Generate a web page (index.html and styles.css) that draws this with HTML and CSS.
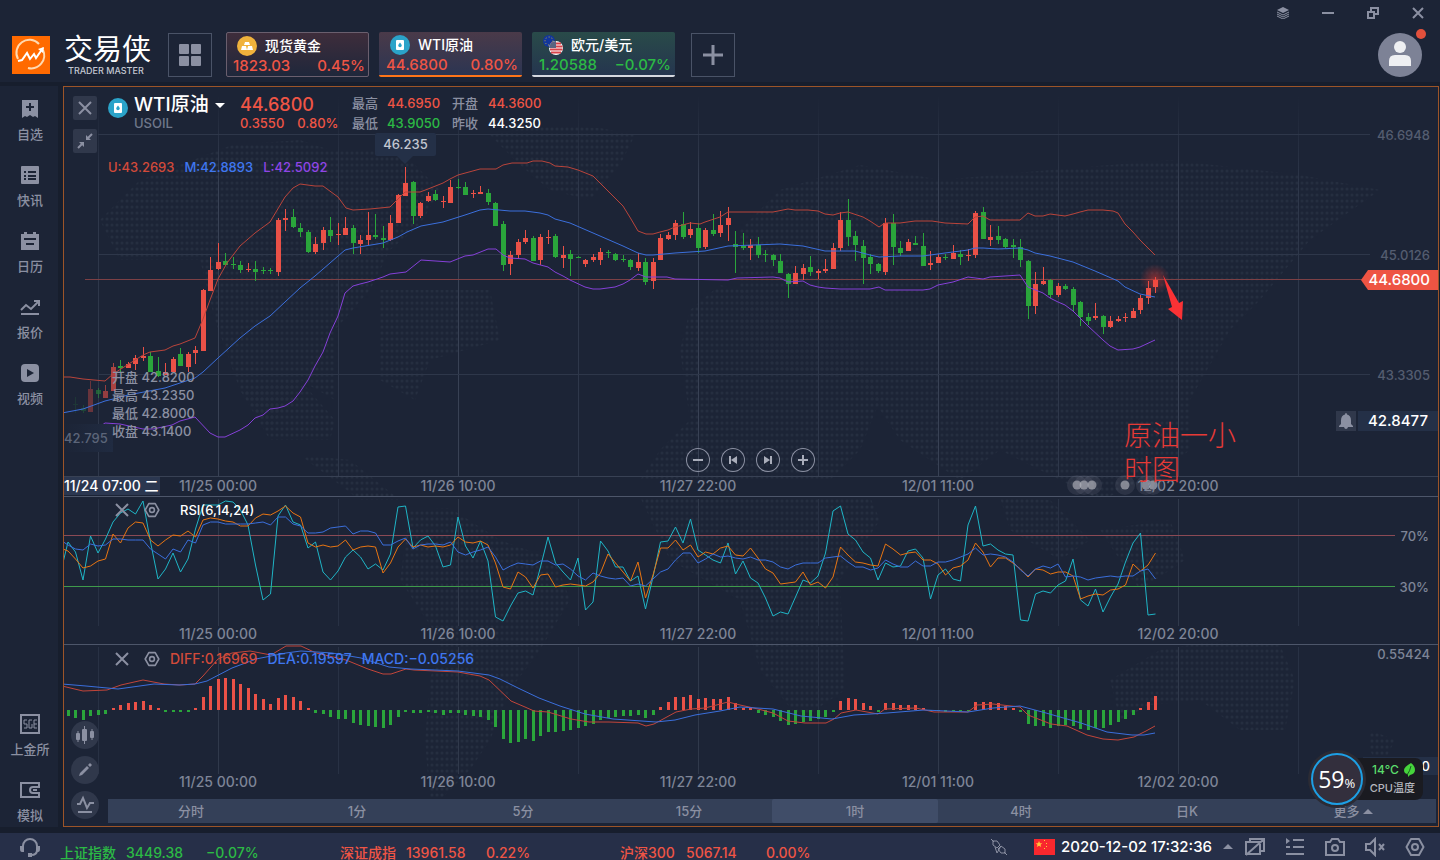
FILE: index.html
```html
<!DOCTYPE html>
<html lang="zh-CN">
<head>
    <meta charset="UTF-8">
    <meta name="viewport" content="width=device-width, initial-scale=1.0">
    <title>交易侠</title>
    <link rel="stylesheet" href="styles.css">
</head>
<body>

<!-- shared icons -->
<svg class="sprite" width="0" height="0" aria-hidden="true">
    <symbol id="i-close" viewBox="0 0 16 16"><path d="M2 2l12 12M14 2L2 14" fill="none" stroke="currentColor" stroke-width="2"/></symbol>
    <symbol id="i-hex" viewBox="0 0 20 20"><path d="M6 2h8l4.500 8-4.500 8H6L1.500 10z" fill="none" stroke="currentColor" stroke-width="2" stroke-linejoin="round"/><circle cx="10" cy="10" r="3" fill="none" stroke="currentColor" stroke-width="2"/></symbol>
    <symbol id="i-oil" viewBox="0 0 20 20"><circle cx="10" cy="10" r="10" fill="#2ba3c9"/><rect x="6" y="5" width="8" height="10" rx="1" fill="#fff"/><path d="M10 7.500c1.200 1.500 1.700 2.200 1.700 3a1.700 1.700 0 0 1-3.400 0c0-.8.500-1.500 1.700-3z" fill="#2ba3c9"/></symbol>
</svg>

<header class="header">
    <div class="window-controls">
        <button type="button" aria-label="图层">
            <svg width="12" height="12" viewBox="0 0 12 12"><path d="M6 0l6 3-6 3-6-3z" fill="currentColor"/><path d="M0 5l6 3 6-3M0 7l6 3 6-3M0 9l6 3 6-3" fill="none" stroke="currentColor"/></svg>
        </button>
        <button type="button" aria-label="最小化">
            <svg width="12" height="12" viewBox="0 0 12 12"><path d="M0 6h12" stroke="currentColor" stroke-width="2"/></svg>
        </button>
        <button type="button" aria-label="还原">
            <svg width="12" height="12" viewBox="0 0 12 12"><path d="M1 5h6v6H1zM4 5V1h7v6H7" fill="none" stroke="currentColor" stroke-width="2"/></svg>
        </button>
        <button type="button" aria-label="关闭">
            <svg width="12" height="12" viewBox="0 0 12 12"><path d="M1 1l10 10M11 1L1 11" stroke="currentColor" stroke-width="2"/></svg>
        </button>
    </div>
    <div class="toolbar">
        <a class="brand" href="#">
            <svg width="38" height="38" viewBox="0 0 38 38">
                <rect width="38" height="38" fill="#ff6a00"/>
                <path d="M31 14a13 13 0 0 1-15 18M6 23A13 13 0 0 1 27 8" fill="none" stroke="#ffd9b0" stroke-width="2"/>
                <path d="M6 25l4-1 5-7 3 6 4-5 2 4 7-10" fill="none" stroke="#fff" stroke-width="2"/>
                <path d="M26 13l6-2-1 6z" fill="#fff"/>
            </svg>
            <span class="brand-text">
                <span class="brand-name">交易侠</span>
                <span class="brand-sub">TRADER MASTER</span>
            </span>
        </a>
        <button class="square-btn" type="button" aria-label="布局">
            <svg width="24" height="24" viewBox="0 0 24 24" fill="currentColor"><rect x="1" y="1" width="10" height="10" rx="1"/><rect x="13" y="1" width="10" height="10" rx="1"/><rect x="1" y="13" width="10" height="10" rx="1"/><rect x="13" y="13" width="10" height="10" rx="1"/></svg>
        </button>
        <div class="cards">
            <button class="card card-gold up" type="button">
                <span class="card-name">
                    <svg width="20" height="20" viewBox="0 0 20 20"><circle cx="10" cy="10" r="10" fill="#f0b23c"/><path d="M8 6h4l1 3H7zM5 10h4l1 4H4zM11 10h4l1 4h-6z" fill="#fff"/></svg>
                    现货黄金
                </span>
                <span class="card-values"><span>1823.03</span><span>0.45%</span></span>
            </button>
            <button class="card card-oil up" type="button">
                <span class="card-name"><svg width="20" height="20"><use href="#i-oil"/></svg>WTI原油</span>
                <span class="card-values"><span>44.6800</span><span>0.80%</span></span>
            </button>
            <button class="card card-eur down" type="button">
                <span class="card-name">
                    <svg width="20" height="20" viewBox="0 0 20 20">
                        <circle cx="6" cy="6" r="6" fill="#12369c"/>
                        <circle cx="6" cy="6" r="4" fill="none" stroke="#c9b53c" stroke-dasharray="1 2"/>
                        <circle cx="13" cy="13" r="7" fill="#fff"/>
                        <path d="M8 8.500h10M7 11.500h12.500M7 14.500h12.500M8 17.500h10" stroke="#d8434a" stroke-width="2"/>
                        <path d="M6 13a7 7 0 0 1 7-7v7z" fill="#5a6480"/>
                    </svg>
                    欧元/美元
                </span>
                <span class="card-values"><span>1.20588</span><span>−0.07%</span></span>
            </button>
        </div>
        <button class="square-btn" type="button" aria-label="添加">
            <svg width="20" height="20" viewBox="0 0 20 20"><path d="M10 0v20M0 10h20" stroke="currentColor" stroke-width="3"/></svg>
        </button>
        <button class="avatar" type="button" aria-label="账户">
            <svg width="44" height="44" viewBox="0 0 44 44"><circle cx="22" cy="22" r="22" fill="#7d8296"/><circle cx="22" cy="14" r="6" fill="#eeeff2"/><path d="M11 33v-5q0-6 6-6h10q6 0 6 6v5z" fill="#eeeff2"/></svg>
            <span class="avatar-dot"></span>
        </button>
    </div>
</header>

<main class="workspace">
    <nav class="sidebar">
        <div class="side-group">
            <a class="side-item" href="#">
                <svg width="20" height="20" viewBox="0 0 20 20"><path d="M2 1h16v18l-3-2-2 1-3-2-3 2-2-1-3 2z" fill="currentColor"/><path d="M10 4v8M6 8h8" stroke="#1c2436" stroke-width="2"/></svg>
                <span>自选</span>
            </a>
            <a class="side-item" href="#">
                <svg width="20" height="20" viewBox="0 0 20 20"><rect x="1" y="1" width="18" height="18" rx="1" fill="currentColor"/><path d="M4 7h2M8 7h8M4 11h2M8 11h8M4 14h2M8 14h8" stroke="#1c2436" stroke-width="2"/></svg>
                <span>快讯</span>
            </a>
            <a class="side-item" href="#">
                <svg width="20" height="20" viewBox="0 0 20 20"><path d="M1 3h3V1h3v2h6V1h3v2h3v16H1z" fill="currentColor"/><path d="M4 8h12M6 13h8" stroke="#1c2436" stroke-width="2"/></svg>
                <span>日历</span>
            </a>
            <a class="side-item" href="#">
                <svg width="20" height="20" viewBox="0 0 20 20"><path d="M1 13l5-5 5 4 8-8M14 4h5v5M1 17h18" fill="none" stroke="currentColor" stroke-width="2"/></svg>
                <span>报价</span>
            </a>
            <a class="side-item" href="#">
                <svg width="20" height="20" viewBox="0 0 20 20"><rect x="1" y="1" width="18" height="18" rx="4" fill="currentColor"/><path d="M7 6l7 4-7 4z" fill="#1c2436"/></svg>
                <span>视频</span>
            </a>
        </div>
        <div class="side-group">
            <a class="side-item" href="#">
                <svg width="20" height="20" viewBox="0 0 20 20"><rect x="1" y="1" width="18" height="18" fill="none" stroke="currentColor" stroke-width="2"/><path d="M7 6H4v4h3v4H4M12 6H9v8h3v-4M17 6h-3v8h3M14 10h3" fill="none" stroke="currentColor"/></svg>
                <span>上金所</span>
            </a>
            <a class="side-item" href="#">
                <svg width="20" height="20" viewBox="0 0 20 20"><path d="M19 6V3H1v14h18v-3M20 7h-7q-3 0-3 3t3 3h7" fill="none" stroke="currentColor" stroke-width="2"/><path d="M13 10h4" stroke="currentColor" stroke-width="2"/></svg>
                <span>模拟</span>
            </a>
        </div>
    </nav>

    <section class="chart-panel">
        <svg class="world-map" viewBox="64 87 1374 739" aria-hidden="true">
            <defs>
                <pattern id="dots" width="5" height="6" patternUnits="userSpaceOnUse"><circle cx="2" cy="3" r="1.500" fill="#252e40"/></pattern>
            </defs>
            <g fill="url(#dots)" id="continents"></g>
        </svg>

        <div class="pane">
            <svg class="plot" id="pricePlot" viewBox="64 87 1374 409"></svg>
            <div class="pane-tools">
                <button type="button" aria-label="关闭"><svg width="16" height="16"><use href="#i-close"/></svg></button>
                <button type="button" aria-label="缩小">
                    <svg width="16" height="16" viewBox="0 0 16 16"><path d="M15 1l-5 5M1 15l5-5" stroke="currentColor" stroke-width="2"/><path d="M9 2v5h5zM2 9h5v5z" fill="currentColor"/></svg>
                </button>
            </div>
            <div class="quote">
                <div class="quote-title">
                    <svg width="20" height="20"><use href="#i-oil"/></svg>
                    <div>
                        <h1>WTI原油<i class="caret-down"></i></h1>
                        <p>USOIL</p>
                    </div>
                </div>
                <div class="quote-last up">
                    <strong>44.6800</strong>
                    <p><span>0.3550</span><span>0.80%</span></p>
                </div>
                <dl class="quote-stats">
                    <dt>最高</dt><dd class="up">44.6950</dd>
                    <dt>开盘</dt><dd class="up">44.3600</dd>
                    <dt>最低</dt><dd class="down">43.9050</dd>
                    <dt>昨收</dt><dd>44.3250</dd>
                </dl>
            </div>
            <div class="legend legend-boll">
                <span class="c-red">U:43.2693</span>
                <span class="c-blue">M:42.8893</span>
                <span class="c-purple">L:42.5092</span>
            </div>
            <div class="peak">46.235</div>
            <div class="trough">42.795</div>
            <ul class="ohlc">
                <li>开盘 42.8200</li>
                <li>最高 43.2350</li>
                <li>最低 42.8000</li>
                <li>收盘 43.1400</li>
            </ul>
            <div class="chart-nav">
                <button type="button" aria-label="缩小"><svg width="24" height="24" viewBox="0 0 24 24"><path d="M7 12h10" stroke="currentColor" stroke-width="2"/></svg></button>
                <button type="button" aria-label="后退"><svg width="24" height="24" viewBox="0 0 24 24" fill="currentColor"><path d="M8 8h2v8H8zM16 8v8l-6-4z"/></svg></button>
                <button type="button" aria-label="前进"><svg width="24" height="24" viewBox="0 0 24 24" fill="currentColor"><path d="M14 8h2v8h-2zM8 8v8l6-4z"/></svg></button>
                <button type="button" aria-label="放大"><svg width="24" height="24" viewBox="0 0 24 24"><path d="M7 12h10M12 7v10" stroke="currentColor" stroke-width="2"/></svg></button>
            </div>
            <div class="cursor-date">11/24 07:00 二</div>
            <div class="note">原油一小<br>时图</div>
            <div class="price-tag">44.6800</div>
            <div class="alert">
                <button type="button" aria-label="提醒"><svg width="14" height="16" viewBox="0 0 14 16"><path d="M7 0q1 0 1 1.500 4 1 4 6V11l2 2v1H0v-1l2-2V7.500q0-5 4-6Q6 0 7 0zM5 14h4q-.5 2-2 2t-2-2z" fill="currentColor"/></svg></button>
                <span>42.8477</span>
            </div>
        </div>

        <div class="pane">
            <svg class="plot" id="rsiPlot" viewBox="64 497 1374 147"></svg>
            <div class="legend legend-rsi">
                <button type="button" aria-label="关闭指标"><svg width="16" height="16"><use href="#i-close"/></svg></button>
                <button type="button" aria-label="指标设置"><svg width="16" height="16"><use href="#i-hex"/></svg></button>
                <span class="rsi-name">RSI(6,14,24)</span>
            </div>
        </div>

        <div class="pane pane-last">
            <svg class="plot" id="macdPlot" viewBox="64 645 1374 154"></svg>
            <div class="legend legend-macd">
                <button type="button" aria-label="关闭指标"><svg width="16" height="16"><use href="#i-close"/></svg></button>
                <button type="button" aria-label="指标设置"><svg width="16" height="16"><use href="#i-hex"/></svg></button>
                <span class="c-red">DIFF:0.16969</span>
                <span class="c-blue">DEA:0.19597</span>
                <span class="c-blue">MACD:−0.05256</span>
            </div>
            <div class="draw-tools">
                <button type="button" aria-label="图表类型"><svg width="20" height="20" viewBox="0 0 20 20"><rect x="1" y="8" width="4" height="7" rx="1" fill="currentColor"/><rect x="7" y="4" width="5" height="12" rx="1" fill="currentColor"/><rect x="15" y="6" width="4" height="7" rx="1" fill="currentColor"/><path d="M3 6v11M9.500 1v18M17 4v11" stroke="currentColor"/></svg></button>
                <button type="button" aria-label="画线"><svg width="20" height="20" viewBox="0 0 20 20"><path d="M4 16l1-3 7-7 2 2-7 7zM13 5l2-2 2 2-2 2z" fill="currentColor"/></svg></button>
                <button type="button" aria-label="指标"><svg width="20" height="20" viewBox="0 0 20 20"><path d="M2 9h3l3-6 4 10 3-5h4M3 17h14" fill="none" stroke="currentColor" stroke-width="2"/></svg></button>
            </div>
            <div class="macd-value">0.47030</div>
            <div class="periods">
                <button type="button">分时</button>
                <button type="button">1分</button>
                <button type="button">5分</button>
                <button type="button">15分</button>
                <button type="button" class="active">1时</button>
                <button type="button">4时</button>
                <button type="button">日K</button>
                <button type="button">更多<i class="caret-up"></i></button>
            </div>
        </div>
    </section>
</main>

<footer class="footer">
    <button class="footer-help" type="button" aria-label="客服">
        <svg width="20" height="20" viewBox="0 0 20 20"><path d="M3 9a7 7 0 0 1 14 0v4q0 5-6 5" fill="none" stroke="currentColor" stroke-width="2"/><path d="M0 9h4v6H2q-2 0-2-3zM16 9h4v3q0 3-2 3h-2zM8 16h4v4H8z" fill="currentColor"/></svg>
    </button>
    <div class="tickers">
        <div class="ticker down"><span>上证指数</span><span>3449.38</span><span>−0.07%</span></div>
        <div class="ticker up"><span>深证成指</span><span>13961.58</span><span>0.22%</span></div>
        <div class="ticker up"><span>沪深300</span><span>5067.14</span><span>0.00%</span></div>
    </div>
    <div class="status">
        <svg class="plug" width="18" height="18" viewBox="0 0 18 18"><path d="M1 1l3 3M3 3h4l3 4-3 3-4-3zM17 17l-3-3M15 15h-4l-3-4 3-3 4 3zM5 9l2 6 4-7" fill="none" stroke="currentColor"/></svg>
        <svg class="flag" width="21" height="16" viewBox="0 0 21 16"><rect width="21" height="16" fill="#f9282e"/><path d="M5 2l1 2.200h2.300L6.500 5.700l.7 2.300L5 6.700 2.800 8l.7-2.300L1.700 4.200H4z" fill="#ffc83c"/><path d="M10 1h1v1h-1zM12 4h1v1h-1zM12 7h1v1h-1zM10 9h1v1h-1z" fill="#ffc83c"/></svg>
        <time>2020-12-02 17:32:36</time>
        <i class="caret-up"></i>
        <button type="button" aria-label="窗口"><svg width="20" height="20" viewBox="0 0 20 20"><path d="M1 5h14v12H1zM5 5V2h14v12h-4M1 18L18 3" fill="none" stroke="currentColor" stroke-width="2"/></svg></button>
        <button type="button" aria-label="列表"><svg width="20" height="20" viewBox="0 0 20 20"><path d="M8 3h11M8 10h11M1 17h18" stroke="currentColor" stroke-width="2"/><path d="M1 1l4 3-4 3zM1 9h4v2H1z" fill="currentColor"/></svg></button>
        <button type="button" aria-label="截图"><svg width="20" height="20" viewBox="0 0 20 20"><path d="M1 5h4l2-3h6l2 3h4v13H1z" fill="none" stroke="currentColor" stroke-width="2"/><circle cx="10" cy="11" r="3" fill="none" stroke="currentColor" stroke-width="2"/></svg></button>
        <button type="button" aria-label="静音"><svg width="20" height="20" viewBox="0 0 20 20"><path d="M1 7h4l5-5v16l-5-5H1zM14 7l5 6M19 7l-5 6" fill="none" stroke="currentColor" stroke-width="2"/></svg></button>
        <button type="button" aria-label="设置"><svg width="20" height="20"><use href="#i-hex"/></svg></button>
    </div>
</footer>

<div class="cpu">
    <div class="cpu-load">59<small>%</small></div>
    <div class="cpu-temp">
        <p>14℃ <svg width="11" height="14" viewBox="0 0 11 14"><path d="M7 0q4 3 4 7t-5 5l-2 2v-3q-4 0-4-4 0-3 7-7z" fill="#46d43c"/><path d="M7 3q-1 5-4 9" stroke="#1d5a22" fill="none"/></svg></p>
        <p class="cpu-label">CPU温度</p>
    </div>
</div>

<script src="script.js"></script>
</body>
</html>
```

FILE: styles.css
```css
* {
    box-sizing: border-box;
}

body {
    margin: 0;
    min-height: 100vh;
    background: #171e2d;
    color: #fff;
    font: 13px/18px Inter, "Noto Sans CJK SC", sans-serif;
    font-weight: 500;
    overflow: hidden;
}

h1, p, ul, dl, dd {
    margin: 0;
    padding: 0;
}

button {
    padding: 0;
    border: 0;
    background: none;
    color: #8b90a2;
    font: inherit;
    cursor: pointer;
}

a {
    color: inherit;
    text-decoration: none;
}

svg {
    display: block;
}

.sprite {
    position: absolute;
}

.up {
    color: #ef5545;
}

.down {
    color: #2cba45;
}

.c-red {
    color: #d24a3a;
}

.c-blue {
    color: #3f77f0;
}

.c-purple {
    color: #8f45e6;
}

.caret-down, .caret-up {
    display: inline-block;
    border: 5px solid transparent;
}

.caret-down {
    border-top-color: currentColor;
    border-bottom: 0;
}

.caret-up {
    border-bottom-color: #8b90a2;
    border-top: 0;
}

/* header */
.header {
    height: 82px;
    background: #1c2436;
}

.window-controls {
    display: flex;
    justify-content: flex-end;
}

.window-controls button {
    display: flex;
    align-items: center;
    justify-content: center;
    width: 45px;
    height: 25px;
}

.toolbar {
    display: flex;
    align-items: center;
    padding: 7px 18px 0 12px;
}

.brand {
    display: flex;
    align-items: center;
    gap: 14px;
    width: 156px;
}

.brand-text {
    display: flex;
    flex-direction: column;
}

.brand-name {
    font-size: 29px;
    font-weight: 400;
    line-height: 32px;
}

.brand-sub {
    padding-left: 4px;
    color: #c3c7d1;
    font-size: 9px;
    line-height: 10px;
}

.square-btn {
    display: flex;
    align-items: center;
    justify-content: center;
    width: 44px;
    height: 44px;
    border: 1px solid #4a5367;
}

.cards {
    display: flex;
    gap: 10px;
    margin: 0 16px 0 14px;
}

.card {
    width: 143px;
    height: 45px;
    padding: 1px 4px 0 7px;
    border-radius: 2px;
    text-align: left;
}

.card.up {
    color: #ef5545;
}

.card.down {
    color: #2cba45;
}

.card-gold {
    padding: 0 3px 0 6px;
    border: 1px solid #6a5f6e;
    background: linear-gradient(#3e2d3b, #1f273b);
}

.card-oil {
    border-bottom: 2px solid #ff7519;
    background: linear-gradient(#4a3a49, #2c3552);
}

.card-eur {
    border-bottom: 2px solid #d5d8e0;
    background: linear-gradient(#294b49, #25354f);
}

.card-name {
    display: flex;
    align-items: center;
    gap: 8px;
    padding-left: 4px;
    color: #fff;
    font-size: 14px;
    line-height: 22px;
}

.card-values {
    display: flex;
    justify-content: space-between;
    font-size: 15px;
    line-height: 18px;
}

.avatar {
    position: relative;
    margin-left: auto;
}

.avatar-dot {
    position: absolute;
    top: -4px;
    right: -4px;
    width: 10px;
    height: 10px;
    border-radius: 50%;
    background: #e2503c;
}

/* workspace */
.workspace {
    display: flex;
    padding: 4px 1px 6px 0;
}

.sidebar {
    display: flex;
    flex-direction: column;
    justify-content: space-between;
    width: 58px;
    margin-right: 5px;
    padding: 13px 0 3px 2px;
    background: #1c2436;
    color: #8b90a2;
}

.side-group {
    display: flex;
    flex-direction: column;
    gap: 22px;
}

.side-item {
    display: flex;
    flex-direction: column;
    align-items: center;
    gap: 6px;
}

.chart-panel {
    position: relative;
    flex: 1;
    border: 1px solid #9c5428;
    background: #1c2436;
}

.world-map {
    position: absolute;
    top: 0;
    left: 0;
    width: 100%;
}

.pane {
    position: relative;
    border-bottom: 1px solid #4d566a;
}

.pane-last {
    padding-bottom: 3px;
    border-bottom: 0;
}

.plot {
    width: 100%;
}

.axis {
    fill: #7e8597;
    font-size: 13px;
}

.axis-date {
    font-size: 14px;
}

.axis-dim {
    fill: #545d70;
}

.pane-tools {
    position: absolute;
    top: 9px;
    left: 9px;
    display: flex;
    flex-direction: column;
    gap: 9px;
}

.pane-tools button {
    display: flex;
    align-items: center;
    justify-content: center;
    width: 24px;
    height: 24px;
    border-radius: 2px;
    background: #30384b;
}

.quote {
    position: absolute;
    top: 9px;
    left: 44px;
    display: flex;
}

.quote-title {
    display: flex;
    gap: 6px;
    width: 132px;
    color: #70788b;
}

.quote-title svg {
    margin-top: 2px;
}

.quote h1 {
    display: flex;
    align-items: center;
    gap: 6px;
    color: #fff;
    font-size: 19px;
    font-weight: 500;
    line-height: 18px;
}

.quote-last {
    width: 112px;
}

.quote-last strong {
    display: block;
    font-size: 18px;
    font-weight: 500;
}

.quote-last p {
    display: flex;
    gap: 13px;
}

.quote-stats {
    display: grid;
    grid-template-columns: 35px 65px 36px 65px;
    line-height: 20px;
    margin-top: -3px;
}

.quote-stats dt {
    color: #8b90a2;
}

.legend {
    position: absolute;
    display: flex;
    align-items: center;
    gap: 10px;
}

.legend-boll {
    top: 71px;
    left: 44px;
}

.legend-rsi, .legend-macd {
    top: 5px;
    left: 50px;
    gap: 14px;
    font-size: 14px;
}

.legend-rsi {
    top: 4px;
}

.legend-macd span {
    margin-right: -4px;
}

.legend-macd .c-red {
    margin-left: -4px;
}

.rsi-name {
    margin-left: 6px;
    font-size: 13px;
}

.peak {
    position: absolute;
    top: 46px;
    left: 311px;
    width: 61px;
    border-radius: 2px;
    background: #243047;
    color: #c3c7d1;
    line-height: 23px;
    text-align: center;
}

.peak::after {
    content: "";
    position: absolute;
    top: 23px;
    left: 22px;
    border: 8px solid transparent;
    border-top-color: #243047;
}

.trough {
    position: absolute;
    top: 337px;
    left: 0;
    width: 49px;
    background: linear-gradient(90deg, #1c2436, #202b41);
    color: #5c6579;
    line-height: 28px;
}

.ohlc {
    position: absolute;
    top: 281px;
    left: 48px;
    color: #8b90a2;
    list-style: none;
}

.chart-nav {
    position: absolute;
    top: 361px;
    left: 0;
    right: 2px;
    display: flex;
    justify-content: center;
    gap: 11px;
}

.chart-nav button {
    width: 24px;
    height: 24px;
    border-radius: 50%;
    box-shadow: inset 0 0 0 1px #8b90a2;
    color: #a9adba;
}

.cursor-date {
    position: absolute;
    bottom: 1px;
    left: 0;
    padding-right: 2px;
    background: #2b3750;
    font-size: 14px;
}

.note {
    position: absolute;
    top: 330px;
    left: 1060px;
    color: #e63a36;
    font: 300 28px/34px "Noto Sans CJK SC", sans-serif;
}

.price-tag {
    position: absolute;
    top: 183px;
    right: 0;
    padding-right: 8px;
    background: #ee5443;
    font-size: 15px;
    line-height: 20px;
}

.price-tag::before {
    content: "";
    position: absolute;
    top: 0;
    left: -7px;
    border: solid transparent;
    border-width: 10px 7px 10px 0;
    border-right-color: #ee5443;
}

.alert {
    position: absolute;
    top: 324px;
    right: 0;
    display: flex;
    gap: 2px;
}

.alert button {
    display: flex;
    align-items: center;
    justify-content: center;
    width: 20px;
    height: 20px;
    background: #30384b;
}

.alert span {
    padding: 0 10px;
    background: #243047;
    font-size: 15px;
    line-height: 20px;
}

.draw-tools {
    position: absolute;
    top: 76px;
    left: 7px;
    display: flex;
    flex-direction: column;
    gap: 7px;
}

.draw-tools button {
    display: flex;
    align-items: center;
    justify-content: center;
    width: 28px;
    height: 28px;
    border-radius: 50%;
    background: #30384b;
}

.macd-value {
    position: absolute;
    top: 112px;
    right: 0;
    padding: 0 8px 0 14px;
    background: #243047;
}

.periods {
    display: flex;
    margin: 0 2px 0 44px;
    background: #344058;
}

.periods button {
    flex: 1;
    line-height: 24px;
    border-radius: 2px;
}

.periods .active {
    background: #404d68;
}

.periods .caret-up {
    margin: 0 0 2px 3px;
}

/* footer */
.footer {
    display: flex;
    height: 27px;
    background: #262f48;
    overflow: hidden;
}

.footer-help {
    width: 60px;
    padding: 4px 0 0 20px;
    align-self: flex-start;
}

.tickers {
    display: flex;
    padding-top: 11px;
    font-size: 14px;
}

.ticker {
    display: grid;
    grid-template-columns: 66px 80px 134px;
}

.status {
    display: flex;
    align-items: center;
    margin-left: auto;
    padding-right: 5px;
    color: #8b90a2;
}

.status .flag {
    margin: 0 6px 0 26px;
}

.status time {
    margin-right: 11px;
    color: #fff;
    font-size: 15px;
}

.status button {
    display: flex;
    justify-content: center;
    width: 40px;
}

.status .caret-up {
    margin-right: 2px;
}

/* cpu widget floating over the window */
.cpu {
    position: absolute;
    top: 753px;
    right: 17px;
    display: flex;
    align-items: center;
}

.cpu-load {
    display: flex;
    align-items: baseline;
    justify-content: center;
    width: 52px;
    height: 52px;
    border: 2px solid #1d9fe4;
    border-radius: 50%;
    background: #332f3d;
    box-shadow: 0 0 0 3px #2b2b34;
    font: 23px/48px "Open Sans", sans-serif;
    z-index: 1;
}

.cpu-load small {
    font-size: 13px;
}

.cpu-temp {
    margin-left: -12px;
    padding: 3px 8px 3px 19px;
    border-radius: 8px;
    background: #1a1b21;
    color: #5bdc6c;
    font-size: 12px;
}

.cpu-temp p {
    display: flex;
    align-items: center;
    justify-content: flex-end;
    gap: 5px;
}

.cpu-temp .cpu-label {
    color: #b4b6bd;
    font-size: 11px;
}
```

FILE: script.js
```js
// One bar every 7.5 units, bar 0 sits on the first vertical grid line
const STEP = 7.5;
const ORIGIN = 98;
const RED = '#ea5147';
const GREEN = '#2aa53b';

const barX = i => ORIGIN + STEP * i;

// direction, high, body top, body bottom, low - first bar is -3
const candles = `
d 397 404 405 413|d 405 408 411 413|u 381 389 412 412|d 388 390 394 398|u 385 391 398 398
u 363 367 391 391|d 360 366 368 372|u 362 364 368 368|u 355 358 364 370|u 347 356 358 361
d 352 356 372 372|d 357 371 376 377|u 363 372 375 375|u 357 359 372 372|d 348 354 366 366
u 352 354 367 372|u 346 350 353 364|u 289 290 351 351|u 257 270 291 291|u 243 262 269 270
d 253 261 265 265|d 257 264 265 269|d 261 265 270 273|u 263 269 270 272|d 261 269 272 281
d 267 270 271 274|d 268 270 271 274|u 218 220 272 276|u 209 218 220 231|d 209 217 227 228
d 223 228 232 237|d 230 232 252 253|u 237 244 252 254|u 227 230 243 250|d 217 230 236 242
u 223 234 235 245|u 217 228 235 235|d 225 228 243 254|u 235 240 244 254|u 212 235 240 245
d 214 235 237 239|d 226 238 240 248|u 215 223 240 241|u 194 195 223 223|u 167 183 196 196
d 181 182 216 224|u 202 203 216 218|u 192 196 201 202|d 190 194 200 201|u 196 201 202 208
u 180 187 203 203|d 179 187 188 189|d 182 187 195 195|u 190 193 194 198|u 186 192 194 194
d 189 193 202 205|d 202 203 226 226|d 221 224 265 271|u 251 255 264 275|u 239 242 255 259
u 230 238 242 244|d 236 238 261 261|u 234 237 260 265|u 230 237 238 244|d 234 236 257 258
u 246 255 258 268|d 250 254 259 276|d 256 257 258 258|u 259 260 264 267|u 254 257 260 262
u 248 252 260 265|d 250 252 253 258|d 253 254 260 261|d 255 259 260 262|d 259 260 267 270
u 253 262 268 271|d 258 262 282 285|u 258 262 281 289|u 234 238 260 260|u 232 235 239 240
u 220 223 235 240|d 212 224 237 239|u 222 229 235 238|d 223 228 248 253|u 228 230 247 249
d 214 230 234 236|u 211 225 233 237|u 207 218 225 241|d 231 244 247 273|d 233 246 248 250
u 239 245 248 260|d 237 245 255 258|d 250 254 255 262|d 254 255 260 266|d 254 261 273 273
d 273 274 284 298|u 266 273 284 284|u 264 268 274 280|d 256 267 272 276|u 269 271 273 279
u 259 269 271 273|u 243 248 269 269|u 212 220 248 251|d 199 220 237 246|d 231 236 245 261
d 240 246 258 284|d 254 257 264 274|d 263 264 271 273|u 218 223 272 275|d 214 223 247 265
d 241 248 253 256|u 239 242 251 251|d 236 243 245 245|d 233 246 266 266|u 251 263 265 270
u 254 257 263 263|d 254 257 258 260|u 245 253 259 259|d 250 254 257 265|u 249 255 256 261
u 211 213 255 258|d 207 212 239 239|u 225 237 240 246|d 226 236 240 244|d 238 239 247 248
d 239 245 247 258|d 239 247 260 267|d 260 261 306 319|u 272 284 306 314|u 267 281 284 285
d 279 280 295 298|u 283 286 295 297|d 284 286 289 290|d 287 289 305 311|d 301 302 317 326
d 313 317 321 325|u 303 316 318 320|d 315 316 327 334|u 316 321 327 328|u 316 319 321 322
u 313 317 318 322|u 308 311 318 318|u 295 298 310 314|u 281 288 298 304|u 277 280 287 293
`.trim().split(/[|\n]/).map(c => c.split(' '));

const bollUpper = '62,377 70,377 83,379 105,381 113,374 143,355 150,352 165,350 173,346 180,344 195,338 203,319 210,300 218,279 227,263 240,246 255,233 270,222 285,197 293,188 300,184 315,186 323,186 338,197 346,208 353,210 370,209 390,207 398,199 405,192 420,192 428,189 443,183 450,179 458,175 480,169 496,169 503,165 512,163 527,163 533,161 542,161 550,163 555,166 568,167 578,170 593,176 623,206 631,219 638,231 646,234 653,234 660,232 668,230 675,227 690,223 700,224 705,222 720,217 728,212 773,212 788,209 795,210 808,210 818,211 825,214 833,215 840,213 848,212 863,217 870,221 879,227 885,223 900,223 915,221 932,221 945,223 968,224 975,217 983,216 990,220 1020,220 1028,213 1035,216 1043,216 1050,214 1065,216 1073,214 1080,212 1088,210 1103,210 1113,211 1118,213 1125,224 1133,232 1140,240 1155,255';
const bollMiddle = '62,413 83,409 105,401 113,399 128,395 165,388 195,378 203,372 218,358 240,338 255,326 270,316 285,302 300,288 315,276 330,263 345,250 353,248 383,243 398,237 407,232 421,226 443,222 465,215 480,210 488,209 510,211 525,211 540,213 548,215 555,219 570,223 600,236 623,246 638,253 646,255 653,255 675,253 705,251 728,246 780,244 803,246 825,251 855,251 870,255 879,257 900,256 923,256 945,253 968,250 975,248 983,248 998,249 1020,248 1028,250 1035,253 1050,256 1073,262 1095,271 1118,281 1125,287 1140,294 1155,297';
const bollLower = '62,451 75,444 90,434 105,423 120,424 143,429 153,429 172,425 180,421 195,417 210,433 218,437 225,437 240,430 248,425 255,418 263,415 270,409 278,408 285,406 293,401 300,392 308,380 315,366 323,352 330,333 338,316 345,293 353,286 360,284 368,282 383,277 390,274 406,272 421,260 450,262 465,256 473,255 488,249 496,249 503,255 510,258 525,259 533,263 548,267 555,272 563,276 570,280 585,287 593,289 600,289 615,287 623,284 630,280 638,274 646,277 667,277 675,279 728,280 737,278 773,277 780,278 788,282 803,281 810,285 818,287 825,288 840,289 870,289 879,287 885,290 923,290 930,289 938,285 953,282 968,277 983,279 990,277 1020,275 1028,287 1043,293 1050,298 1058,302 1065,305 1073,311 1088,326 1103,340 1110,346 1118,350 1133,349 1140,347 1155,340';

// RSI lines, first bar is -5
const rsi6 = [573,542,552,580,536,553,539,522,513,509,514,501,542,579,569,553,572,559,529,505,505,505,501,502,510,525,565,600,594,516,505,522,525,548,542,572,580,571,557,550,557,569,564,570,554,507,506,548,540,536,546,567,565,517,546,558,541,561,617,621,606,593,591,595,567,537,563,572,580,558,610,602,541,551,567,567,581,576,609,577,542,541,527,543,519,550,555,560,563,543,574,561,578,583,598,616,612,614,597,580,583,576,553,511,506,534,540,552,558,580,563,567,566,551,549,558,599,575,569,579,581,525,506,546,544,550,554,555,620,621,594,591,593,585,581,559,600,606,589,612,597,584,562,543,533,615,614];
const rsi14 = [548,551,559,568,566,561,559,534,543,528,522,523,540,546,540,535,536,531,537,520,518,519,521,522,526,526,518,514,515,511,506,513,517,543,547,545,547,546,540,550,547,546,547,573,563,547,539,547,545,547,546,547,545,537,542,543,541,545,563,587,589,572,577,588,575,574,587,585,584,585,586,582,573,554,563,572,581,562,598,575,548,548,540,550,545,557,552,554,548,546,555,556,548,558,569,573,584,583,582,572,585,582,588,577,547,555,562,563,565,566,544,549,555,553,552,560,560,564,575,568,566,560,543,552,567,558,558,563,569,577,569,570,574,572,572,576,599,596,594,595,590,589,585,564,571,565,553];
const rsi24 = [540,545,549,550,544,546,545,539,539,540,540,540,549,554,559,549,552,540,543,525,522,522,524,524,524,524,523,522,525,517,517,524,526,533,533,532,528,527,526,534,531,531,533,545,545,541,538,549,545,544,544,545,542,552,555,552,550,547,557,570,566,563,564,565,561,561,565,564,569,576,580,573,576,578,579,578,586,584,586,579,572,569,560,553,553,563,559,554,557,556,558,559,557,560,560,562,567,569,565,563,563,563,558,557,556,562,567,567,570,568,560,564,567,567,561,566,566,562,562,560,557,554,548,555,554,555,557,562,570,576,569,566,568,564,577,576,577,580,578,577,576,577,576,576,571,569,579];

// MACD histogram, first bar is -5
const macd = [-6,-6,-8,-10,-6,-5,-4,2,5,7,8,9,5,2,-2,-2,-2,-2,2,13,24,31,32,31,26,22,16,11,6,12,15,13,9,2,-3,-4,-7,-9,-9,-13,-15,-16,-17,-18,-15,-7,-2,-3,-3,-2,-3,-5,-3,-3,-5,-6,-7,-10,-17,-29,-33,-32,-29,-31,-26,-22,-22,-21,-20,-18,-16,-14,-10,-8,-7,-6,-6,-5,-8,-5,3,8,13,13,15,11,12,11,11,13,7,2,2,-3,-5,-7,-11,-15,-14,-12,-11,-9,-7,-2,9,12,11,7,4,-2,7,7,5,5,5,2,-1,-1,-2,-1,-1,-1,8,8,8,7,4,2,-2,-14,-16,-16,-18,-16,-15,-16,-19,-20,-18,-18,-15,-12,-9,-5,2,8,14];
const diff = '62,686 83,691 107,690 121,685 143,680 164,684 180,685 195,684 203,676 218,659 232,653 250,651 271,655 286,646 301,646 316,653 346,660 368,669 383,674 391,674 406,669 414,670 436,671 458,672 480,676 489,680 511,701 525,707 534,711 548,712 571,719 589,722 609,722 638,723 646,726 654,724 676,712 691,709 705,708 728,702 740,705 758,709 773,713 788,721 805,723 826,723 834,719 841,713 856,710 878,714 885,709 916,708 934,712 968,712 977,705 993,704 1020,707 1028,715 1051,724 1067,726 1087,735 1103,739 1118,740 1134,737 1146,731 1155,726';
const dea = '62,684 86,686 118,689 154,684 179,685 195,684 207,681 232,668 256,659 286,653 301,651 332,653 361,658 389,667 411,669 458,671 489,675 500,679 518,688 539,698 560,706 585,714 613,719 656,722 675,720 695,715 720,711 740,707 773,709 801,716 832,719 854,715 887,713 924,710 968,712 993,708 1020,706 1046,713 1081,723 1107,732 1132,735 1144,735 1155,733';

const dates = ['11/25 00:00', '11/26 10:00', '11/27 22:00', '12/01 11:00', '12/02 20:00'];

const continents = [
    '140,180 180,165 232,145 300,140 330,150 400,150 440,190 420,225 390,250 370,290 335,330 335,400 300,380 270,430 240,390 215,320 200,260 120,260 100,220',
    '240,390 300,380 335,420 330,440 270,440', '300,455 350,460 400,500 360,500',
    '490,135 540,125 600,128 635,135 620,165 590,200 550,190 520,165',
    '380,290 490,290 500,340 430,360 415,400 380,380',
    '410,510 450,508 500,540 555,560 570,600 540,650 510,690 490,740 470,770 440,800 430,800 425,740 430,680 440,640 400,580',
    '690,310 720,285 780,300 850,330 880,400 860,450 830,480 640,480 660,450 690,420 680,350',
    '640,497 870,497 880,520 840,580 845,690 800,720 760,670 740,600 670,560',
    '780,190 860,165 940,180 1050,170 1170,160 1300,175 1380,190 1310,240 1260,300 1230,330 1190,400 1190,450 1150,480 1100,500 1060,480 1000,450 960,480 900,440 860,380 780,370 740,340 740,230',
    '1000,497 1050,500 1090,540 1060,560 1010,530', '1100,530 1170,520 1185,560 1140,590',
    '1110,680 1160,650 1220,640 1280,645 1295,680 1285,730 1240,730 1200,700 1150,705 1120,720',
    '1370,730 1395,740 1380,770 1370,750'
];

const rect = (x, y, w, h, fill, extra = '') => `<rect x="${x}" y="${y}" width="${w}" height="${h}" fill="${fill}" ${extra}/>`;
const line = (points, color) => `<polyline points="${points}" fill="none" stroke="${color}"/>`;
const text = (x, y, value, cls = '', anchor = 'middle') => `<text x="${x}" y="${y}" class="axis ${cls}" text-anchor="${anchor}">${value}</text>`;
const series = values => values.map((y, i) => `${barX(i - 5)},${y}`).join(' ');

function grid(top, bottom, major, minor) {
    let out = '';
    for (let x = 98, n = 0; x < 1300; x += 120, n++) {
        out += rect(x, top, 1, bottom - top, n % 2 ? major : minor);
    }
    return out;
}

function dateLabels(y) {
    return dates.map((d, i) => text(218 + 240 * i, y, d, 'axis-date')).join('');
}

function fadeIn(id, color) {
    return `<linearGradient id="${id}" x1="0" y1="0" x2="0" y2="1"><stop offset="0" stop-color="${color}" stop-opacity="0"/><stop offset=".25" stop-color="${color}"/></linearGradient>`;
}

function drawPrice() {
    let out = '<defs>' + fadeIn('major', '#384154') + fadeIn('minor', '#2e374a') + '</defs>';
    out += grid(95, 476, 'url(#major)', 'url(#minor)');
    [[134, '46.6948'], [254, '45.0126'], [374, '43.3305']].forEach(([y, label]) => {
        out += rect(98, y, 1272, 1, '#2e374a') + text(1430, y + 6, label, 'axis-dim', 'end');
    });
    out += rect(64, 476, 1374, 1, '#384154');
    out += rect(85, 279, 1280, 1, '#7c4045');

    candles.forEach(([dir, high, top, bottom, low], n) => {
        const i = n - 3;
        const x = Math.floor(barX(i));
        const color = dir === 'u' ? RED : GREEN;
        const fade = i < 3 ? 0.15 + (i + 3) * 0.11 : 1;
        out += `<g opacity="${fade}">` + rect(x, high, 1, low - high, color) + rect(x - 2, top, 5, bottom - top, color) + '</g>';
    });
    out += line(bollUpper, '#b9443b') + line(bollMiddle, '#3b6fdc') + line(bollLower, '#8540d8');

    // last price glow and the hand-drawn arrow
    out += '<defs><radialGradient id="glow"><stop offset="0" stop-color="#ff3b30" stop-opacity=".45"/><stop offset="1" stop-color="#ff3b30" stop-opacity="0"/></radialGradient></defs>';
    out += '<circle cx="1155" cy="279" r="15" fill="url(#glow)"/>';
    out += '<path d="M1163 275L1179 303L1183 301L1182 320L1168 309L1172 307z" fill="#fa3235"/>';

    // news markers on the time axis
    [1077, 1084, 1092, 1125, 1146, 1153].forEach(x => {
        out += `<circle cx="${x}" cy="485" r="10" fill="#8b90a2" opacity=".15"/><circle cx="${x}" cy="485" r="4.500" fill="#b4b6bd" opacity=".65"/>`;
    });
    return out + dateLabels(491);
}

function drawRsi() {
    return grid(499, 626, '#30394b', '#283144') + rect(64, 535, 1331, 1, '#8b4a55') + rect(64, 586, 1331, 1, '#3f9a4b')
        + line(series(rsi6), '#1fb5c6') + line(series(rsi14), '#e87512') + line(series(rsi24), '#3b6fdc')
        + text(1429, 541, '70%', '', 'end') + text(1429, 592, '30%', '', 'end') + dateLabels(639);
}

function drawMacd() {
    let out = grid(647, 774, '#30394b', '#283144');
    macd.forEach((v, n) => {
        out += rect(Math.floor(barX(n - 5)) - 1, v > 0 ? 710 - v : 710, 3, Math.abs(v), v > 0 ? RED : GREEN);
    });
    return out + line(diff, '#c2453a') + line(dea, '#3b6fdc')
        + text(1430, 659, '0.55424', '', 'end') + dateLabels(787);
}

document.getElementById('continents').innerHTML = continents.map(p => `<polygon points="${p}"/>`).join('');
document.getElementById('pricePlot').innerHTML = drawPrice();
document.getElementById('rsiPlot').innerHTML = drawRsi();
document.getElementById('macdPlot').innerHTML = drawMacd();
```
